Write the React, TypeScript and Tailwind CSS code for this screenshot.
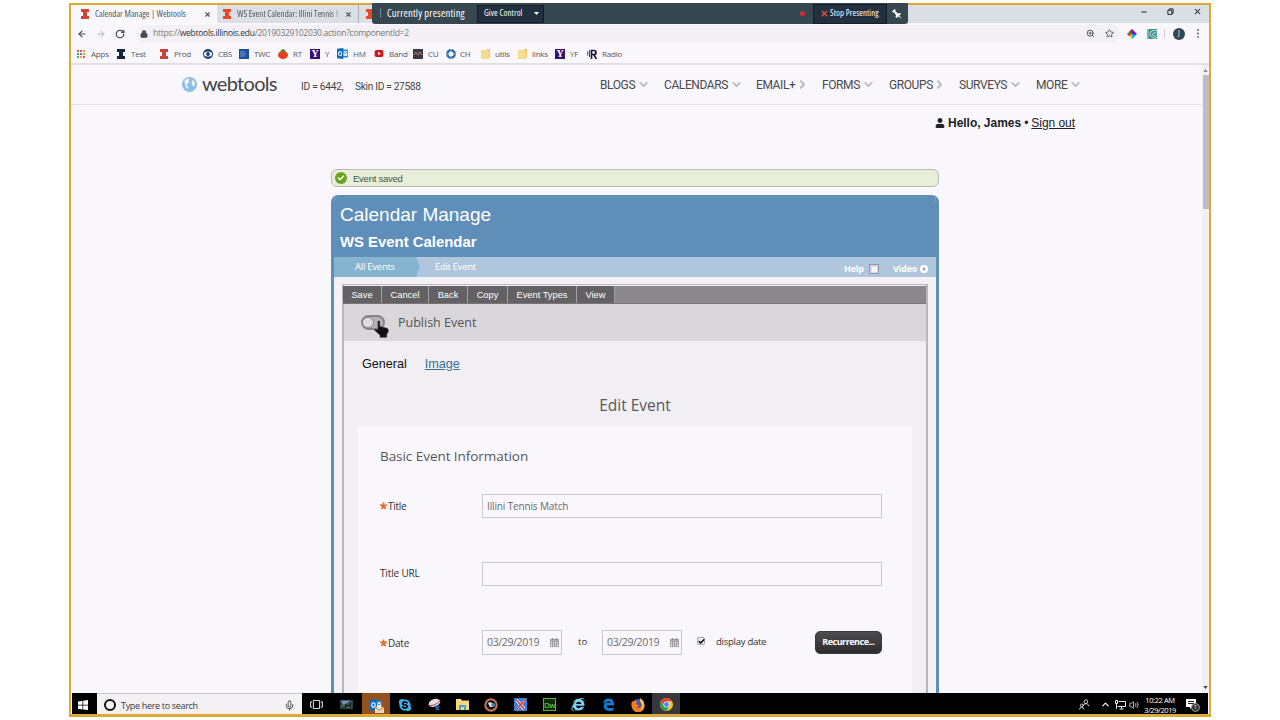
import type { ReactNode } from "react";
import { FaUser, FaSkype, FaInternetExplorer } from "react-icons/fa";
import { Minus, X, Star, ZoomIn, ArrowLeft, ArrowRight, RotateCw, Lock, Mic, ChevronUp, ChevronDown, ChevronRight, Check, Volume2 } from "lucide-react";

const BlockI = ({ color }: { color: string }) => (
  <svg viewBox="0 0 8 10" className="h-[10px] w-2 shrink-0">
    <path d="M0 0h8v3H6v4h2v3H0V7h2V3H0z" fill={color} />
  </svg>
);

const Folder = () => (
  <svg viewBox="0 0 9 10" className="h-[10px] w-[9px]">
    <path d="M0 1h8v9H0z" fill="#f3dc8c" />
    <path d="M6 0h3v9H8V2H6z" fill="#e9cc70" />
  </svg>
);

const Yahoo = () => (
  <span className="flex h-[10px] w-[10px] items-center justify-center bg-[#3a1173] font-['Liberation_Serif',serif] text-[10px] font-bold leading-none text-white">Y</span>
);

const Outlook = ({ cls }: { cls: string }) => (
  <svg viewBox="0 0 14 14" className={cls}>
    <path d="M6 2h8v10H6z" fill="#1f86d8" />
    <path d="M8 4h5v6H8z" fill="#e9f4fc" />
    <path d="m8 5 2.5 2L13 5" stroke="#1f6fb8" fill="none" />
    <path d="M0 1 8 0v14l-8-1z" fill="#0f6cbd" />
    <ellipse cx="4" cy="7" rx="2" ry="2.6" stroke="#fff" strokeWidth="1.3" fill="none" />
  </svg>
);

const bookmarks: { w: string; label: string; gap: string; icon: ReactNode }[] = [
  {
    w: "w-[40px]", gap: "w-[14px]", label: "Apps",
    icon: (
      <svg viewBox="0 0 8 8" className="h-2 w-2">
        {["#e2574c", "#e2574c", "#e8a13c", "#4caf6a", "#4a7fe0", "#e8a13c", "#4caf6a", "#e8a13c", "#e2574c"].map((c, i) => (
          <rect key={i} x={(i % 3) * 3} y={Math.floor(i / 3) * 3} width="2" height="2" fill={c} />
        ))}
      </svg>
    ),
  },
  { w: "w-[43px]", gap: "w-[14px]", label: "Test", icon: <BlockI color="#14263f" /> },
  { w: "w-[43px]", gap: "w-[14px]", label: "Prod", icon: <BlockI color="#c8443a" /> },
  {
    w: "w-[36px]", gap: "w-[15px]", label: "CBS",
    icon: (
      <svg viewBox="0 0 10 10" className="h-[10px] w-[10px]">
        <circle cx="5" cy="5" r="5" fill="#173f70" />
        <ellipse cx="5" cy="5" rx="4" ry="2.6" fill="#fff" />
        <circle cx="5" cy="5" r="1.9" fill="#173f70" />
      </svg>
    ),
  },
  {
    w: "w-[39px]", gap: "w-[15px]", label: "TWC",
    icon: (
      <svg viewBox="0 0 10 10" className="h-[10px] w-[10px]">
        <path d="M0 0h10v10H0z" fill="#1c4f9c" />
        <path d="M1 3h5M1 5h6M1 7h5" stroke="#9db9e0" strokeWidth=".7" />
      </svg>
    ),
  },
  {
    w: "w-[32px]", gap: "w-[15px]", label: "RT",
    icon: (
      <svg viewBox="0 0 10 10" className="h-[10px] w-[10px]">
        <ellipse cx="5" cy="6" rx="5" ry="4" fill="#e8401f" />
        <path d="M2 2 5 0l3 2-3 1.5z" fill="#3f8a35" />
      </svg>
    ),
  },
  { w: "w-[27px]", gap: "w-[15px]", label: "Y", icon: <Yahoo /> },
  { w: "w-[37px]", gap: "w-[16px]", label: "HM", icon: <Outlook cls="h-[11px] w-[11px]" /> },
  {
    w: "w-[39px]", gap: "w-[15px]", label: "Band",
    icon: (
      <svg viewBox="0 0 10 8" className="h-[7px] w-[10px]">
        <rect width="10" height="8" rx="2" fill="#d4151b" />
        <path d="m4 2 3 2-3 2z" fill="#fff" />
      </svg>
    ),
  },
  {
    w: "w-[33px]", gap: "w-[15px]", label: "CU",
    icon: (
      <svg viewBox="0 0 10 10" className="h-[10px] w-[10px]">
        <path d="M0 0h10v10H0z" fill="#3b3a4a" />
        <path d="M1 6 3 3l2 3 2-3 2 3" stroke="#c77a5a" fill="none" />
      </svg>
    ),
  },
  {
    w: "w-[35px]", gap: "w-[14px]", label: "CH",
    icon: (
      <svg viewBox="0 0 10 10" className="h-[10px] w-[10px]">
        <circle cx="5" cy="5" r="3.7" stroke="#2a6eae" strokeWidth="2.4" fill="none" />
        <path d="M5 0v2.5M10 5H7.500M5 10V7.500M0 5h2.500" stroke="#bcd8ee" strokeWidth=".7" />
      </svg>
    ),
  },
  { w: "w-[37px]", gap: "w-[14px]", label: "utils", icon: <Folder /> },
  { w: "w-[37px]", gap: "w-[14px]", label: "links", icon: <Folder /> },
  { w: "w-[32px]", gap: "w-[15px]", label: "YF", icon: <Yahoo /> },
  {
    w: "w-[50px]", gap: "w-[15px]", label: "Radio",
    icon: (
      <svg viewBox="0 0 10 10" className="h-[10px] w-[10px]">
        <path d="M4.500 10V1.500H7a2 2 0 0 1 0 4H5M7 6l2.500 4" stroke="#1a1647" strokeWidth="1.700" fill="none" />
        <path d="M2.500 1v7M.7 2.500v4" stroke="#3d3a80" strokeWidth="1" />
      </svg>
    ),
  },
];

const nav = [
  { label: "BLOGS", w: "w-[64px]", tw: "w-[39px]", right: false },
  { label: "CALENDARS", w: "w-[92px]", tw: "w-[68px]", right: false },
  { label: "EMAIL+", w: "w-[66px]", tw: "w-[42px]", right: true },
  { label: "FORMS", w: "w-[67px]", tw: "w-[42px]", right: false },
  { label: "GROUPS", w: "w-[70px]", tw: "w-[46px]", right: true },
  { label: "SURVEYS", w: "w-[77px]", tw: "w-[52px]", right: false },
  { label: "MORE", w: "w-[50px]", tw: "w-[35px]", right: false },
];

const actions = [
  { label: "Save", w: "w-[39px]" },
  { label: "Cancel", w: "w-[47px]" },
  { label: "Back", w: "w-[39px]" },
  { label: "Copy", w: "w-[40px]" },
  { label: "Event Types", w: "w-[69px]" },
  { label: "View", w: "w-[38px]" },
];

function TabStrip() {
  return (
    <div className="flex h-[18px] shrink-0 bg-[#dadfe5] text-[9px] text-[#55565b] [font-stretch:75%]">
      <div className="flex w-[146px] items-center bg-[#f9f7fb] pl-[10px]">
        <BlockI color="#d0443a" />
        <span className="ml-[6px] w-[109px] whitespace-nowrap">Calendar Manage | Webtools</span>
        <X className="h-[7px] w-[7px]" strokeWidth={4} />
      </div>
      <div className="flex w-[142px] items-center border-r border-[#aeb2b8] pl-[6px]">
        <BlockI color="#e34a27" />
        <span className="ml-[6px] w-[108px] whitespace-nowrap [mask-image:linear-gradient(to_right,black_88%,transparent_95%)]">WS Event Calendar: Illini Tennis M</span>
        <X className="h-[7px] w-[7px]" strokeWidth={4} />
      </div>
      <div className="flex items-center pl-[7px]"><BlockI color="#e34a27" /></div>
      <div className="ml-auto flex h-[13px] items-center gap-[19px] pr-[7px] text-[#222]">
        <Minus className="h-[8px] w-[8px]" strokeWidth={3} />
        <svg viewBox="0 0 8 8" className="h-[7px] w-[7px]" fill="none" stroke="#222" strokeWidth="1.1">
          <path d="M1 2.500h4.500v5H1zM2.500 2.500V1H7v5H5.500" />
        </svg>
        <X className="h-[9px] w-[9px]" strokeWidth={2.8} />
      </div>
    </div>
  );
}

function AddressBar() {
  return (
    <div className="flex h-[21px] shrink-0 items-center pl-[6px] text-[#4a4b50]">
      <ArrowLeft className="h-[10px] w-[10px]" strokeWidth={2.8} />
      <ArrowRight className="ml-[9px] h-[10px] w-[10px] text-[#b4b3b8]" strokeWidth={2.4} />
      <RotateCw className="ml-[9px] h-[10px] w-[10px]" strokeWidth={3} />
      <div className="ml-[11px] flex h-[17px] w-[984px] items-center rounded-full bg-[#f2f0f4] pl-[4px]">
        <Lock className="h-[8px] w-[8px]" strokeWidth={3} fill="currentColor" />
        <span className="ml-[5px] whitespace-nowrap text-[8.500px] tracking-[-0.28px] text-[#77777c]">
          https://<span className="text-[#2f3034]">webtools.illinois.edu</span>/20190329102030.action?componentId=2
        </span>
        <ZoomIn className="ml-auto h-[9px] w-[9px]" strokeWidth={2.4} />
        <Star className="ml-[10px] mr-[6px] h-[9px] w-[9px]" strokeWidth={2.4} />
      </div>
      <svg viewBox="0 0 10 10" className="ml-[7px] h-[10px] w-[10px]">
        <path d="M5 5V0L0 5z" fill="#1fa33c" />
        <path d="M5 5V0l5 5z" fill="#6a1bb0" />
        <path d="M5 5H0l5 5z" fill="#f0c41b" />
        <path d="M5 5h5l-5 5z" fill="#1c6ee0" />
        <path d="M5 5 2 3 5 0z" fill="#e51f2c" />
        <path d="M5 5 8 7 5 10z" fill="#22b7c9" />
        <path d="M5 5 0 5 2 7z" fill="#e5342c" />
      </svg>
      <svg viewBox="0 0 10 10" className="ml-[10px] h-[10px] w-[10px]">
        <path d="M0 0h10v10H0z" fill="#3f8f8f" />
        <path d="M10 1.500H6Q3 2 3 5t4 4h3M9.500 4H7Q5.500 4 5.500 5.500T7.500 7H9.500M1 0v10" stroke="#d3ecec" strokeWidth=".8" fill="none" />
      </svg>
      <div className="ml-[7px] h-[9px] w-px bg-[#cfcdd2]" />
      <div className="ml-[8px] flex h-[12px] w-[12px] items-center justify-center rounded-full bg-[#37474f] text-[7px] text-white">J</div>
      <svg viewBox="0 0 2 10" className="ml-[12px] h-[9px] w-[2px]" fill="#4a4b50">
        <circle cx="1" cy="1" r="1" /><circle cx="1" cy="5" r="1" /><circle cx="1" cy="9" r="1" />
      </svg>
    </div>
  );
}

function Bookmarks() {
  return (
    <div className="flex h-[21px] shrink-0 items-center border-b-2 border-[#e0dde3] pl-[6px] text-[8px] tracking-[-0.2px] text-[#55565b]">
      {bookmarks.map((b) => (
        <div key={b.label} className={`flex shrink-0 items-center ${b.w}`}>
          <div className={`shrink-0 ${b.gap}`}>{b.icon}</div>
          <span className="whitespace-nowrap">{b.label}</span>
        </div>
      ))}
    </div>
  );
}

function SiteHeader() {
  return (
    <div className="flex h-[40px] shrink-0 items-center border-b border-[#e3e1e6] pl-[111px] font-[Roboto,sans-serif]">
      <svg viewBox="0 0 16 16" className="h-[15px] w-[15px] shrink-0">
        <circle cx="8" cy="8" r="8" fill="#8fbde6" />
        <path d="M3 3.500 6 1.500l2 .5-1 2 1 1-2 2-1 2 2 1-1 3-2-3-1-3-.5-2zM10.500 3l2.500 1.500 1 3-1.500 2.500-1.500-1-1-2.500 1-1z" fill="#eef5fc" />
      </svg>
      <span className="ml-[5px] w-[99px] pb-[3px] font-[Lato,sans-serif] text-[20px] leading-[38px] tracking-[-0.7px] text-[#444347]">webtools</span>
      <span className="w-[54px] whitespace-nowrap pt-[5px] text-[10.200px] tracking-[-0.25px] text-[#444347]">ID = 6442,</span>
      <span className="w-[245px] whitespace-nowrap pt-[5px] text-[10.200px] tracking-[-0.33px] text-[#444347]">Skin ID = 27588</span>
      {nav.map((n) => (
        <div key={n.label} className={`flex shrink-0 items-center text-[12px] tracking-[-0.4px] text-[#4a494d] ${n.w}`}>
          <span className={`shrink-0 ${n.tw}`}>{n.label}</span>
          {n.right ? <ChevronRight className="-ml-[2px] h-[13px] w-[13px] shrink-0 text-[#bab8bd]" strokeWidth={3.4} /> : <ChevronDown className="-ml-[2px] h-[13px] w-[13px] shrink-0 text-[#bab8bd]" strokeWidth={3.4} />}
        </div>
      ))}
    </div>
  );
}

const CalendarIcon = () => (
  <svg viewBox="0 0 9 9" className="h-[9px] w-[9px] shrink-0">
    <path d="M.5 1.500h8v7h-8zM.5 3.800h8M.5 6.100h8M2.500 3v5.500M4.500 3v5.500M6.500 3v5.500M.5 2.300h8" stroke="#8b898d" strokeWidth=".8" fill="none" />
    <path d="M2.500 0v2M6.500 0v2" stroke="#8b898d" strokeWidth="1.200" />
  </svg>
);

const Asterisk = () => (
  <svg viewBox="0 0 8 8" className="mb-px mr-px h-[8px] w-[7px] shrink-0" stroke="#e0692c" strokeWidth="2">
    <path d="M4 4V0M4 4l3.800-1.200M4 4l2.300 3.300M4 4 1.700 7.300M4 4 .2 2.800" />
  </svg>
);

const DateBox = () => (
  <div className="flex h-[25px] w-[80px] items-center border border-[#cbc9cd] pl-[4px] text-[10.500px] tracking-[-0.35px] text-[#6b6a6e]">
    <span className="w-[63px]">03/29/2019</span>
    <CalendarIcon />
  </div>
);

function EventForm() {
  return (
    <div className="ml-[15px] h-[267px] w-[554px] shrink-0 overflow-hidden bg-[#f9f7fb] pl-[22px] text-[#333236]">
      <h3 className="mt-[20px] h-[20px] whitespace-nowrap text-[13.500px] leading-[20px] tracking-[-0.05px] text-[#58575b]">Basic Event Information</h3>
      <div className="mt-[28px] flex h-[24px] items-center">
        <div className="flex w-[102px] items-center pt-px text-[10px] font-medium tracking-[-0.25px]"><Asterisk />Title</div>
        <div className="flex h-[24px] w-[400px] items-center border border-[#cbc9cd] pl-[4px] text-[10px] tracking-[-0.14px] text-[#6b6a6e]">Illini Tennis Match</div>
      </div>
      <div className="mt-[44px] flex h-[24px] items-center">
        <div className="w-[102px] pb-[2px] text-[10px] font-medium tracking-[-0.15px]">Title URL</div>
        <div className="h-[24px] w-[400px] border border-[#cbc9cd]" />
      </div>
      <div className="mt-[44px] flex h-[25px] items-center text-[10px]">
        <div className="flex w-[102px] items-center pt-[2px] font-medium tracking-[-0.25px]"><Asterisk />Date</div>
        <DateBox />
        <span className="w-[40px] pl-[16px] text-[9.600px]">to</span>
        <DateBox />
        <div className="mb-[3px] ml-[15px] flex h-[8px] w-[8px] items-center justify-center rounded-[2px] border border-[#a5a3a8] bg-[#eeecef]">
          <Check className="h-[7px] w-[7px] shrink-0 text-black" strokeWidth={5} />
        </div>
        <span className="ml-[11px] w-[99px] pb-px text-[9.600px] tracking-[-0.3px]">display date</span>
        <button className="-mt-[1px] h-[23px] w-[67px] rounded-[5px] border border-[#3a393c] bg-linear-to-b from-[#4d4c4f] to-[#2c2b2e] text-[9px] font-bold tracking-[-0.5px] text-white">Recurrence...</button>
      </div>
    </div>
  );
}

function CalendarPanel() {
  return (
    <div className="mt-[8px] h-[498px] w-[608px] shrink-0 overflow-hidden rounded-t-[7px] border-x-[3px] border-[#5f8eb9] bg-[#f3f1f5]">
      <div className="flex h-[62px] flex-col bg-[#5f8eb9] pl-[6px] font-['Liberation_Sans',sans-serif] text-white">
        <h1 className="mt-[9px] whitespace-nowrap text-[19px] leading-[22px]">Calendar Manage</h1>
        <h2 className="mt-[6px] whitespace-nowrap text-[14.900px] font-bold leading-[20px]">WS Event Calendar</h2>
      </div>
      <div className="flex h-[20px] items-center bg-[#b0c6dc] text-[9.500px] text-white">
        <div className="flex h-[20px] w-[101px] items-center bg-[#85b4d1] pl-[21px] tracking-[-0.25px] [clip-path:polygon(0_0,82px_0,86px_50%,82px_100%,0_100%)]">All Events</div>
        <span className="w-[409px] tracking-[-0.3px]">Edit Event</span>
        <div className="flex items-center pt-[4px] text-[9px] font-bold tracking-[-0.2px]">
          <span className="w-[25px]">Help</span>
          <span className="flex h-[10px] w-[10px] items-center justify-center border border-[#8b9bab] bg-[#d5d9df]"><span className="h-[5px] w-[5px] bg-[#f6f5f7]" /></span>
          <span className="ml-[14px] w-[27px]">Video</span>
          <svg viewBox="0 0 8 8" className="h-[8px] w-[8px]"><circle cx="4" cy="4" r="4" fill="#fff" /><path d="m3 2 3 2-3 2z" fill="#7f9cba" /></svg>
        </div>
      </div>
      <div className="ml-[8px] mt-[7px] h-[409px] w-[586px] border-x-2 border-t border-[#b9b7bc] bg-[#f1eff3]">
        <div className="-ml-px mt-px flex h-[18px] border-b border-[#777578] bg-[#8a888b] font-['Liberation_Sans',sans-serif] text-[9.300px] text-white">
          {actions.map((a) => (
            <div key={a.label} className={`flex h-full items-center justify-center whitespace-nowrap border-r border-[#a3a1a4] bg-[#636164] pt-[2px] ${a.w}`}>{a.label}</div>
          ))}
        </div>
        <div className="flex h-[37px] items-center bg-[#d9d7da] pl-[17px]">
          <div className="relative h-[15px] w-[24px] rounded-full border-2 border-[#858387] bg-[#b4b2b6]">
            <div className="-ml-px h-[11px] w-[12px] rounded-full border border-[#858387] bg-[#dddbde]" />
            <svg viewBox="0 0 14 20" className="absolute left-[11px] top-[3px] h-[18px] w-[15px]" preserveAspectRatio="none">
              <path d="M3.500 1.500Q4.500 0 5.500 1.500V7l6.500 1.800q2 1 1.500 4L12 16v3.500H5.500V17L.5 11.500Q0 9.500 2 10l1.500 1z" fill="#111" stroke="#777" strokeWidth=".4" />
            </svg>
          </div>
          <span className="ml-[13px] whitespace-nowrap pt-[2px] text-[12.500px] text-[#555458]">Publish Event</span>
        </div>
        <div className="ml-[18px] mt-[14px] flex h-[18px] items-center gap-[18px] font-['Liberation_Sans',sans-serif] text-[12.600px]">
          <span className="text-[#111]">General</span>
          <span className="text-[#3b7099] underline">Image</span>
        </div>
        <h2 className="mt-[21px] h-[22px] text-center text-[15.500px] leading-[22px] text-[#58575b]">Edit Event</h2>
        <div className="-ml-px mt-[10px]"><EventForm /></div>
      </div>
    </div>
  );
}

function Taskbar() {
  return (
    <div className="mx-px flex h-[23px] shrink-0 items-center bg-black text-white">
      <svg viewBox="0 0 10 10" className="ml-[6px] h-[10px] w-[10px]" fill="#fff"><path d="M0 1.500 4.500.8v4H0zM5.200.7 10 0v4.800H5.200zM0 5.500h4.500v4L0 8.800zM5.200 5.500H10V10l-4.800-.6z" /></svg>
      <div className="ml-[9px] flex h-full w-[205px] items-center border-t border-[#c9c8ca] bg-[#f3f1f4] text-[#3b3a3e]">
        <div className="ml-[7px] h-[12px] w-[12px] rounded-full border-2 border-[#111]" />
        <span className="ml-[5px] w-[163px] whitespace-nowrap pt-px text-[9px] tracking-[-0.32px]">Type here to search</span>
        <Mic className="h-[11px] w-[11px]" strokeWidth={2} />
      </div>
      <svg viewBox="0 0 14 10" className="ml-[8px] h-[9px] w-[13px]" fill="none" stroke="#fff"><path d="M3.500.5h7v9h-7zM2 2H.5v6H2M12 2h1.500v6H12" /></svg>
      <svg viewBox="0 0 14 12" className="ml-[17px] h-[11px] w-[13px]">
        <path d="M0 1h14v10H0z" fill="#334852" /><path d="M1 2h10L4 7z" fill="#7794b3" /><path d="M2 10 6 5l3 2 3-4v7z" fill="#1d2b21" /><path d="M2 8h3M7 9h4" stroke="#4e9a56" />
      </svg>
      <div className="ml-[9px] flex h-full w-[28px] items-center justify-center bg-[#94501f]">
        <div className="relative">
          <Outlook cls="h-[12px] w-[14px]" />
          <svg viewBox="0 0 9 6" className="absolute -bottom-[2px] -right-px h-[6px] w-[9px]"><path d="M0 0h9v6H0z" fill="#f3d9b8" /><path d="m0 0 4.500 3.500L9 0" stroke="#b07a45" fill="none" /></svg>
        </div>
      </div>
      <FaSkype className="ml-[8px] h-[14px] w-[14px] text-[#35b5ee]" />
      <svg viewBox="0 0 14 13" className="ml-[15px] h-[13px] w-[14px]">
        <ellipse cx="7.500" cy="5" rx="6" ry="3.700" transform="rotate(-20 7 5)" fill="#e8dce0" /><path d="M1 7q6 2 12-4" stroke="#b8465a" fill="none" /><path d="m8 8 4 4M12 8l-3 4" stroke="#2d72b8" strokeWidth="1.300" />
      </svg>
      <svg viewBox="0 0 13 11" className="ml-[15px] h-[11px] w-[13px]">
        <path d="M0 0h5l1 1.500h7V11H0z" fill="#f5d878" /><path d="M3 6h7v5H8V8H5v3H3z" fill="#4b9fd8" />
      </svg>
      <svg viewBox="0 0 14 14" className="ml-[15px] h-[14px] w-[14px]">
        <circle cx="7" cy="7" r="5.700" fill="#151515" stroke="#ca7256" strokeWidth="2" /><path d="M4 5q3-2 5 1v3H6z" fill="#e6ecf1" /><circle cx="9" cy="7" r="2" fill="#5389ad" />
      </svg>
      <svg viewBox="0 0 13 13" className="ml-[16px] h-[13px] w-[13px]">
        <rect width="13" height="13" rx="1" fill="#3d7ed0" /><path d="M2.500 2 10 11" stroke="#fff" strokeWidth="3" /><path d="M10.500 2 3 11" stroke="#fff" strokeWidth="2" /><path d="M2.500 2 10 11M10.500 2 3 11" stroke="#cc3439" strokeWidth="1.400" />
      </svg>
      <div className="ml-[16px] flex h-[13px] w-[13px] items-center justify-center border border-[#58b23c] bg-[#122b0b] text-[8px] tracking-[-0.4px] text-[#7bdb4f]">Dw</div>
      <FaInternetExplorer className="ml-[15px] h-[13px] w-[14px] text-[#7fd0f0]" />
      <svg viewBox="0 0 14 14" className="ml-[17px] h-[13px] w-[13px]">
        <path d="M1 6Q2 0 8 .5 13 1 13 8H5q.3 3 3.500 3 2 0 4-1v3q-3 1.500-6 .8Q2 12.800 2 8.500 2 5 6 3.500 3 4 1 6zM5 5.500h4q0-2-2-2t-2 2z" fill="#1879d4" fillRule="evenodd" />
      </svg>
      <svg viewBox="0 0 14 14" className="ml-[16px] h-[14px] w-[14px]">
        <circle cx="7" cy="7" r="6" fill="#3b57b8" />
        <path d="M1 3 3 4l1-2 2 2-1 2 3 1q-1 3-3 2 2 2 5 0 2-3 0-6-1-2-2-2 4 0 5 4 2 5-2 8-4 3-8 0Q-1 9 1 3z" fill="#f47c20" />
        <path d="M9 0q5 3 4 8-1 4-4 5 3-4 1-8Q8 3 9 0z" fill="#fdbf2d" />
      </svg>
      <div className="ml-[7px] flex h-full w-[28px] items-center justify-center bg-[#39373c]">
        <svg viewBox="0 0 14 14" className="h-[13px] w-[13px]">
          <circle cx="7" cy="7" r="7" fill="#f4c531" />
          <path d="M.9 3.500A7 7 0 0 1 13.100 3.500H7L4 8.700z" fill="#db4437" />
          <path d="M.9 3.500A7 7 0 0 0 6.900 14L10 8.700 4 8.700z" fill="#2f9d58" />
          <circle cx="7" cy="7" r="3.300" fill="#fff" /><circle cx="7" cy="7" r="2.600" fill="#4285f4" />
        </svg>
      </div>
      <svg viewBox="0 0 12 12" className="ml-auto h-[11px] w-[11px]" fill="none" stroke="#ddd"><circle cx="7.500" cy="3" r="2" /><path d="M4 8q1-3 3.500-3T11 8" /><circle cx="3" cy="7" r="1.500" /><path d="M.5 11.500Q1 9 3 9t2.500 2.500" /></svg>
      <ChevronUp className="ml-[10px] h-[11px] w-[11px]" strokeWidth={2.500} />
      <svg viewBox="0 0 11 10" className="ml-[4px] h-[10px] w-[11px]" fill="none" stroke="#eee"><path d="M3.500 1.500h7v5h-8M6.500 6.500v2M4.500 9h4M.5.5h2v3h-2zM1.500 3.500V9" /></svg>
      <Volume2 className="ml-[3px] h-[10px] w-[10px]" strokeWidth={1.800} />
      <div className="ml-[3px] flex w-[36px] flex-col items-center whitespace-nowrap text-[7.500px] leading-[10px] tracking-[-0.4px]">
        <span>10:22 AM</span><span>3/29/2019</span>
      </div>
      <div className="relative ml-[8px] mr-[9px] h-[13px] w-[13px]">
        <svg viewBox="0 0 13 13" className="h-[13px] w-[13px]"><path d="M0 1h10v8H6l-2 2V9H0z" fill="#fff" /><path d="M2 3.500h6M2 5.500h6" stroke="#222" /></svg>
        <span className="absolute left-[5px] top-[5px] flex h-[9px] w-[9px] items-center justify-center rounded-full border border-[#999] bg-[#333] text-[6px]">1</span>
      </div>
    </div>
  );
}

function PresenterBar() {
  return (
    <div className="absolute left-[372px] top-[3px] flex h-[21px] w-[536px] items-center rounded-b-[3px] bg-[#37474f] text-white">
      <svg viewBox="0 0 2 10" className="ml-[8px] h-[9px] w-[2px]" fill="#e4e8ea"><path d="M0 0h1v1H0zM0 2.500h1v1H0zM0 5h1v1H0zM0 7.500h1v1H0z" /></svg>
      <span className="ml-[5px] w-[90px] whitespace-nowrap text-[10.500px] tracking-[0.2px] [font-stretch:75%]">Currently presenting</span>
      <div className="flex h-[18px] w-[67px] items-center border border-[#141e29] bg-[#212f3f] pl-[6px] text-[8.800px] tracking-[0.1px] [font-stretch:75%]">
        <span className="w-[50px] whitespace-nowrap">Give Control</span>
        <svg viewBox="0 0 5 3" className="h-[3px] w-[5px]"><path d="M0 0h5L2.500 3z" fill="#fff" /></svg>
      </div>
      <div className="ml-auto mr-[8px] h-[5px] w-[5px] rounded-full bg-[#d02f3a]" />
      <div className="flex h-[20px] w-[74px] items-center border border-[#141e29] bg-[#212f3f] pl-[6px] text-[8.800px] tracking-[0.08px] [font-stretch:75%]">
        <X className="h-[9px] w-[9px] text-[#d94f3a]" strokeWidth={4} />
        <span className="ml-[1px] whitespace-nowrap">Stop Presenting</span>
      </div>
      <svg viewBox="0 0 10 10" className="ml-[5px] mr-[6px] h-[10px] w-[10px]"><path d="M0 2.500 2.500 0l1 1v1.500L6 4.500l2-.5 1 1-1.800 1.800L10 10 6.300 7.500 4.500 9l-1-1L4 6 2 3.500H1z" fill="#fff" /></svg>
    </div>
  );
}

export default function App() {
  return (
    <div className="relative h-[720px] w-[1280px] overflow-hidden bg-white pl-[69px] pt-[3px] font-['Open_Sans',sans-serif]">
      <div className="flex h-[714px] w-[1142px] flex-col overflow-hidden border-2 border-b-[3px] border-[#dba936] bg-[#f9f7fb]">
        <TabStrip />
        <AddressBar />
        <Bookmarks />
        <div className="flex h-[628px] shrink-0">
          <div className="flex h-full w-[1131px] flex-col overflow-hidden">
            <SiteHeader />
            <div className="ml-[864px] flex h-[37px] shrink-0 items-center whitespace-nowrap pb-px font-['Liberation_Sans',sans-serif] text-[12px] text-[#222126]">
              <FaUser className="mb-px mr-[3px] h-[10px] w-[10px]" />
              <b className="tracking-[-0.02px]">Hello, James</b><span className="mx-[3px]">•</span><span className="tracking-[-0.05px] underline">Sign out</span>
            </div>
            <div className="ml-[260px] mt-[27px]">
              <div className="flex h-[18px] w-[608px] items-center rounded-[6px] border border-[#b4bea9] bg-[#e8eeda] pl-[3px] font-['Liberation_Sans',sans-serif] text-[9.500px] tracking-[-0.24px] text-[#3c5a41]">
                <span className="mr-[6px] flex h-[12px] w-[12px] items-center justify-center rounded-full bg-[#6aa51f]"><Check className="h-[8px] w-[8px] text-white" strokeWidth={4} /></span>
                <span className="pt-[2px]">Event saved</span>
              </div>
              <CalendarPanel />
            </div>
          </div>
          <div className="flex w-[7px] flex-col items-center bg-[#f2f0f4]">
            <svg viewBox="0 0 6 4" className="mt-[4px] h-[3px] w-[5px] shrink-0"><path d="M0 4h6L3 0z" fill="#8d8b90" /></svg>
            <div className="mt-[3px] h-[134px] w-[6px] bg-[#bfbdc1]" />
            <svg viewBox="0 0 6 4" className="mb-[4px] mt-auto h-[3px] w-[5px] shrink-0"><path d="M0 0h6L3 4z" fill="#444" /></svg>
          </div>
        </div>
        <Taskbar />
      </div>
      <PresenterBar />
    </div>
  );
}
